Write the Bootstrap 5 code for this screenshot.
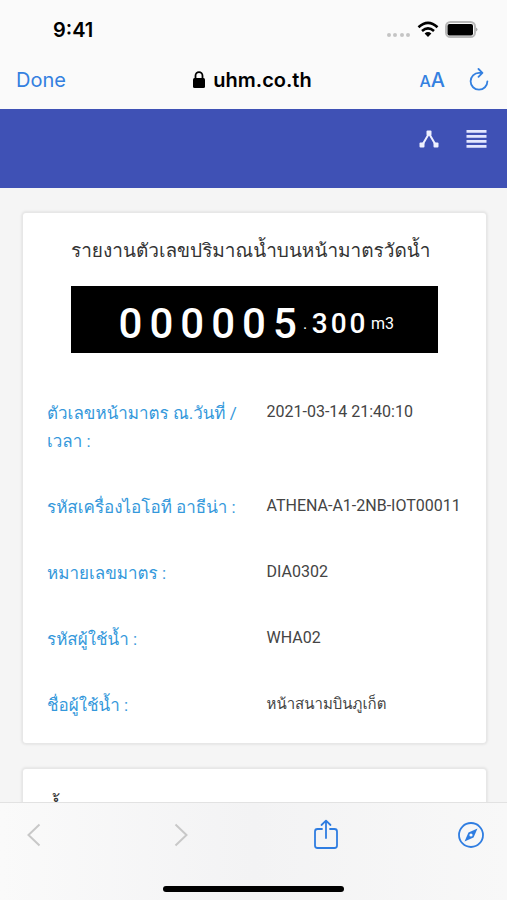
<!DOCTYPE html>
<html lang="th">
<head>
<meta charset="utf-8">
<meta name="viewport" content="width=device-width, initial-scale=1">
<title>uhm.co.th</title>
<link href="https://cdn.jsdelivr.net/npm/bootstrap@5.3.0/dist/css/bootstrap.min.css" rel="stylesheet">
<style>
body { font-family: Roboto, Loma, Garuda, Waree, "Noto Sans Thai Looped", "Noto Sans", sans-serif; background: #f5f5f5; color: #444; }
.browser-top, .browser-bottom { font-family: Inter, sans-serif; }
.browser-top { background: #fafafa; color: #000; }
.status-row { height: 60px; padding: 0 29px 0 53px; font-size: 20px; }
.address-row { height: 49px; padding: 0 18px 10px 16px; font-size: 20px; }
.address-row > * { flex: 1 1 0; }
.ios-link { color: #3480e0; text-decoration: none; }
.text-size-small { font-size: 16px; font-weight: 500; }
.text-size-large { font-size: 20px; font-weight: 500; }
.site-bar { background: #3f51b5; height: 79px; padding: 21px 20px 0; gap: 26px; }
.plain-btn { border: 0; background: none; padding: 0; line-height: 1; display: inline-flex; }
.report-area { padding: 25px 21px 0 23px; gap: 26px; }
.report-card { border: 0; border-radius: 3px; box-shadow: 0 0 2px 2px #e6e6e6; padding: 23px 24px 24px; }
.report-title { font-size: 19px; line-height: 30px; margin: 0; color: #333; font-weight: 400; }
.report-title-main { margin-left: 24px; }
.meter { background: #000; color: #fff; margin: 20px 24px 46px; padding: 14px 44px 5px; }
.digit-big, .digit-small { font-family: Roboto, sans-serif; text-align: center; font-weight: 500; }
.digit-big { font-size: 42px; width: 31px; line-height: 48px; }
.digit-small { font-size: 28px; width: 19px; line-height: 48px; }
.meter-dot { font-size: 16px; width: 10px; text-align: center; }
.meter-unit { font-size: 16px; margin-left: 4px; }
.field-list { display: grid; gap: 38px; }
.field-name { color: #3498db; font-size: 17px; line-height: 28px; font-weight: 400; }
.field-value { font-size: 16px; line-height: 26px; }
.field-value-thai { font-size: 15px; }
.browser-bottom { background: linear-gradient(90deg, #fafafa, #f3f3f4 50%, #f8f8f8); border-top: 1px solid #e2e2e2; height: 98px; padding: 16px 22px 8px; }
.home-bar { background: #000; width: 181px; height: 6px; border-radius: 3px; }
</style>
</head>
<body>
<div class="d-flex flex-column vh-100 overflow-hidden">
  <header class="browser-top flex-shrink-0">
    <div class="status-row d-flex align-items-center justify-content-between">
      <span class="fw-semibold">9:41</span>
      <svg width="92" height="20" viewBox="0 0 92 20" aria-hidden="true">
        <g fill="#c4c4c4"><circle cx="3" cy="15" r="2"/><circle cx="9" cy="15" r="2"/><circle cx="16" cy="15" r="2"/><circle cx="22" cy="15" r="2"/></g>
        <g fill="none" stroke="#000" stroke-width="2.6"><path d="M32.500 7.200Q42-1.400 51.500 7.200"/><path d="M36 11Q42 5.600 48 11"/></g>
        <path d="M38.600 13.500Q42 10.600 45.400 13.500L42 17z"/>
        <rect x="60" y="2" width="29" height="15" rx="4.500" fill="#fafafa" stroke="#b8b8b8" stroke-width="2"/>
        <rect x="61.500" y="4" width="25.500" height="11.500" rx="2"/>
        <path d="M90 7.500q3 2 0 4z" fill="#a8a8a8"/>
      </svg>
    </div>
    <div class="address-row d-flex align-items-center">
      <div><a class="ios-link" href="#">Done</a></div>
      <div class="d-flex align-items-center justify-content-center gap-2 fw-semibold text-nowrap">
        <svg width="12" height="17" viewBox="0 0 12 17" aria-hidden="true"><rect y="7" width="12" height="10" rx="1.500"/><path d="M2.500 8V4.700a3.500 3.500 0 0 1 7 0V8" fill="none" stroke="#000" stroke-width="1.800"/></svg>
        <span>uhm.co.th</span>
      </div>
      <div class="d-flex justify-content-end align-items-center gap-4">
        <button class="plain-btn ios-link align-items-baseline" type="button" aria-label="Text size"><span class="text-size-small">A</span><span class="text-size-large">A</span></button>
        <button class="plain-btn ios-link" type="button" aria-label="Reload">
          <svg width="20" height="24" viewBox="0 0 20 24" fill="none" stroke="#3480e0" stroke-width="1.800" stroke-linecap="round" stroke-linejoin="round"><path d="M13 4.900H10A8.400 8.400 0 1 0 18.400 13.300M9.500 1l3.900 3.900L9.500 8.800"/></svg>
        </button>
      </div>
    </div>
  </header>
  <nav class="site-bar d-flex justify-content-end align-items-start flex-shrink-0" aria-label="Site">
    <button class="plain-btn" type="button" aria-label="Share">
      <svg width="22" height="20" viewBox="0 0 22 20"><path d="M4 15.500L11 3.500L18 15.500" fill="none" stroke="#eef0ff" stroke-width="2"/><g fill="#eef0ff"><rect x="8.500" y="0.500" width="5" height="5" rx="1"/><rect x="1.500" y="12.500" width="5" height="5" rx="1"/><rect x="15.500" y="12.500" width="5" height="5" rx="1"/></g></svg>
    </button>
    <button class="plain-btn" type="button" aria-label="Menu">
      <svg width="21" height="20" viewBox="0 0 21 20" fill="#e3e7ff"><path d="M.500 0h20v2.700H.500zM.500 5h20v2.700H.500zM.500 10h20v2.700H.500zM.500 15h20v2.700H.500z"/></svg>
    </button>
  </nav>
  <main class="report-area d-flex flex-column flex-grow-1 overflow-hidden">
    <section class="report-card card flex-shrink-0">
      <h1 class="report-title report-title-main text-nowrap">รายงานตัวเลขปริมาณน้ำบนหน้ามาตรวัดน้ำ</h1>
      <div class="meter d-flex align-items-center justify-content-center">
        <span class="digit-big">0</span><span class="digit-big">0</span><span class="digit-big">0</span><span class="digit-big">0</span><span class="digit-big">0</span><span class="digit-big">5</span>
        <span class="meter-dot">.</span>
        <span class="digit-small">3</span><span class="digit-small">0</span><span class="digit-small">0</span>
        <span class="meter-unit">m3</span>
      </div>
      <dl class="field-list mb-0">
        <div class="row"><dt class="col-6 field-name">ตัวเลขหน้ามาตร ณ.วันที่ / เวลา :</dt><dd class="col-6 mb-0 field-value">2021-03-14 21:40:10</dd></div>
        <div class="row"><dt class="col-6 field-name">รหัสเครื่องไอโอที อาธีน่า :</dt><dd class="col-6 mb-0 field-value text-nowrap">ATHENA-A1-2NB-IOT00011</dd></div>
        <div class="row"><dt class="col-6 field-name">หมายเลขมาตร :</dt><dd class="col-6 mb-0 field-value">DIA0302</dd></div>
        <div class="row"><dt class="col-6 field-name">รหัสผู้ใช้น้ำ :</dt><dd class="col-6 mb-0 field-value">WHA02</dd></div>
        <div class="row"><dt class="col-6 field-name">ชื่อผู้ใช้น้ำ :</dt><dd class="col-6 mb-0 field-value field-value-thai">หน้าสนามบินภูเก็ต</dd></div>
      </dl>
    </section>
    <section class="report-card card flex-shrink-0">
      <h2 class="report-title">น้ำ</h2>
    </section>
  </main>
  <footer class="browser-bottom d-flex flex-column justify-content-between align-items-center flex-shrink-0">
    <div class="d-flex justify-content-between align-items-center w-100">
      <button class="plain-btn" type="button" aria-label="Back" disabled><svg width="28" height="32" viewBox="0 0 28 32" fill="none" stroke="#c8c8c8" stroke-width="2"><path d="M17.500 5.500L6.500 16L17.500 26.500"/></svg></button>
      <button class="plain-btn" type="button" aria-label="Forward" disabled><svg width="28" height="32" viewBox="0 0 28 32" fill="none" stroke="#c8c8c8" stroke-width="2"><path d="M8.500 5.500L19.500 16L8.500 26.500"/></svg></button>
      <button class="plain-btn" type="button" aria-label="Share page"><svg width="28" height="32" viewBox="0 0 28 32" fill="none" stroke="#2f7de1" stroke-width="1.800" stroke-linecap="round" stroke-linejoin="round"><path d="M10 10H5.500A2.500 2.500 0 0 0 3 12.500v14A2.500 2.500 0 0 0 5.500 29h17a2.500 2.500 0 0 0 2.500-2.500v-14A2.500 2.500 0 0 0 22.500 10H18M14 19V2M9.500 6L14 1.700 18.500 6"/></svg></button>
      <button class="plain-btn" type="button" aria-label="Open in Safari"><svg width="28" height="32" viewBox="0 0 28 32"><circle cx="14" cy="16" r="12" fill="none" stroke="#2f7de1" stroke-width="1.800"/><path d="M20.500 9.500L16.500 18.500L7.500 22.500L11.500 13.500z" fill="#2f7de1"/><circle cx="14" cy="16" r="1.600" fill="#fafafa"/></svg></button>
    </div>
    <div class="home-bar"></div>
  </footer>
</div>
<script src="https://cdn.jsdelivr.net/npm/bootstrap@5.3.0/dist/js/bootstrap.bundle.min.js"></script>
</body>
</html>
